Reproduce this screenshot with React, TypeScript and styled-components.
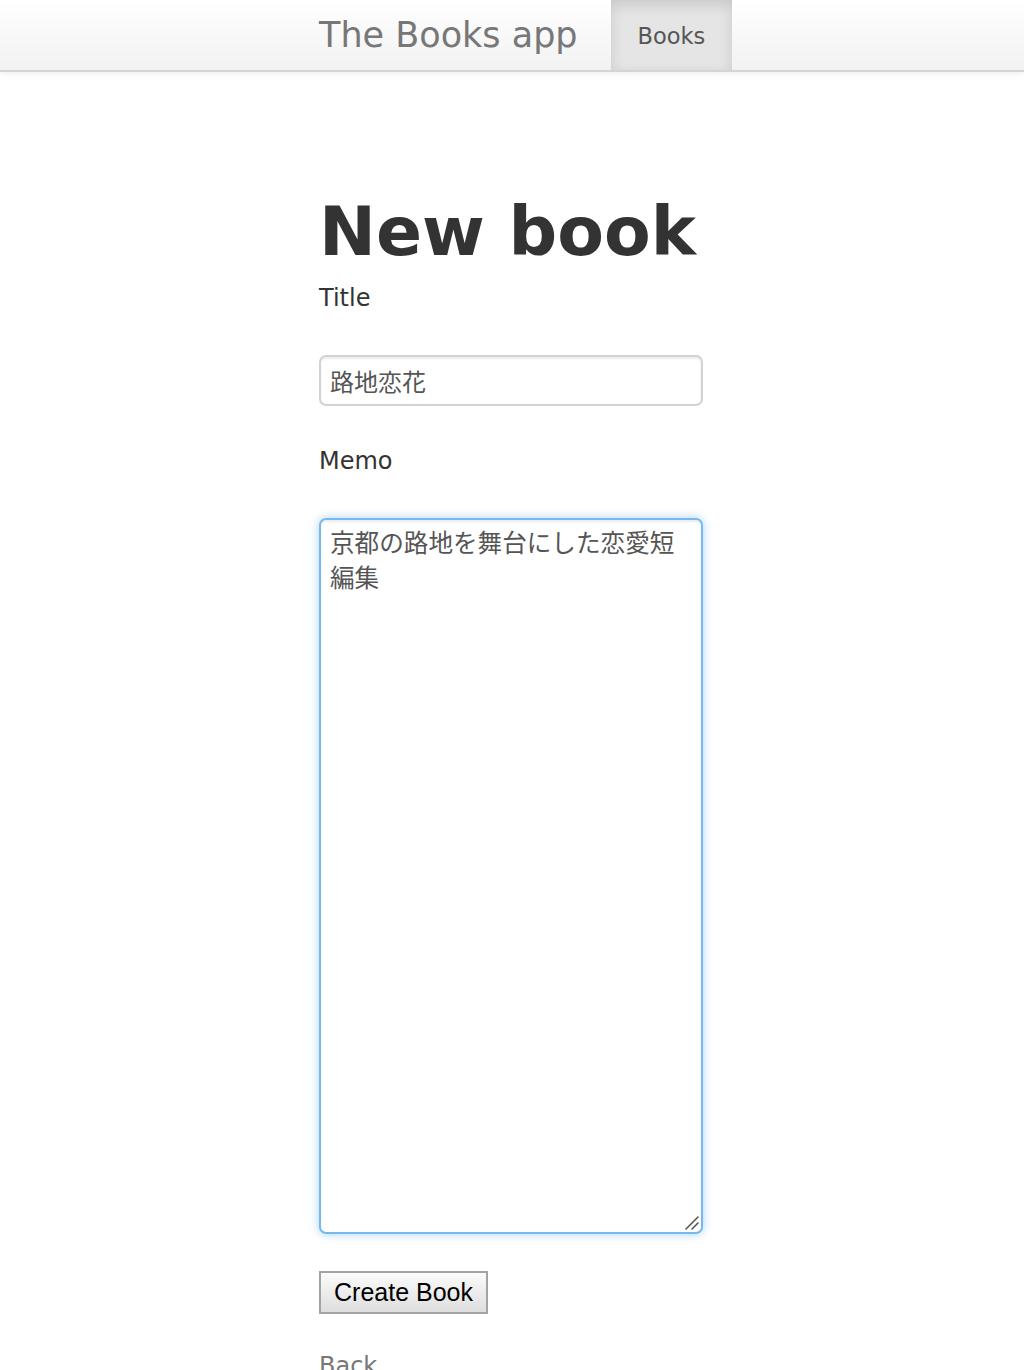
import React from 'react';
import styled, { createGlobalStyle } from 'styled-components';

const GlobalStyle = createGlobalStyle`
  html, body {
    margin: 0;
    padding: 0;
    background: #ffffff;
  }
  body {
    font-family: 'DejaVu Sans', 'Noto Sans CJK JP', sans-serif;
    font-size: 24px;
    line-height: 35px;
    color: #333333;
  }
`;

const Navbar = styled.header`
  height: 70px;
  background: linear-gradient(#ffffff, #f2f2f2);
  border-bottom: 2px solid #d4d4d4;
  box-shadow: 0 2px 6px rgba(0, 0, 0, 0.065);
`;

const Container = styled.div`
  width: 386px;
  margin: 0 auto;
`;

const NavInner = styled(Container)`
  display: flex;
  align-items: stretch;
  height: 70px;
`;

const Brand = styled.a`
  display: flex;
  align-items: center;
  padding: 0 35px 0 0;
  font-size: 35px;
  color: #777777;
  text-decoration: none;
  white-space: nowrap;
`;

const NavItem = styled.a<{ $active?: boolean }>`
  display: flex;
  align-items: center;
  margin-left: -2px;
  padding: 3px 27px 0;
  font-size: 22.5px;
  color: #555555;
  text-decoration: none;
  background: ${(p) => (p.$active ? '#e5e5e5' : 'transparent')};
  box-shadow: ${(p) => (p.$active ? 'inset 0 5px 14px rgba(0, 0, 0, 0.125)' : 'none')};
`;

const Main = styled(Container)`
  padding-top: 125px;
`;

const Heading = styled.h1`
  margin: 0 0 14px;
  font-size: 68px;
  line-height: 70px;
  font-weight: bold;
  color: #333333;
  white-space: nowrap;
`;

const Form = styled.form`
  display: flex;
  flex-direction: column;
  align-items: flex-start;
`;

const Label = styled.label`
  display: block;
  margin-bottom: 39px;
  color: #333333;
`;

const Field = styled.div`
  position: relative;
  margin-bottom: 38px;
`;

const TextInput = styled.input`
  box-sizing: border-box;
  width: 384px;
  height: 51px;
  margin: 0;
  padding: 0 9px;
  font-family: 'DejaVu Sans', 'Noto Sans CJK JP', sans-serif;
  font-size: 24px;
  color: #555555;
  background: #ffffff;
  border: 2px solid #d2d2d2;
  border-radius: 7px;
  box-shadow: inset 0 2px 2px rgba(0, 0, 0, 0.075);
  outline: none;
`;

const TextArea = styled.textarea<{ $focused?: boolean }>`
  box-sizing: border-box;
  display: block;
  width: 384px;
  height: 716px;
  margin: 0;
  padding: 6px 16px 4px 9px;
  font-family: 'DejaVu Sans', 'Noto Sans CJK JP', sans-serif;
  font-size: 24.6px;
  line-height: 35px;
  color: #555555;
  background: #ffffff;
  border: 2px solid ${(p) => (p.$focused ? 'rgba(82, 168, 236, 0.8)' : '#d2d2d2')};
  border-radius: 7px;
  box-shadow: ${(p) =>
    p.$focused
      ? 'inset 0 2px 2px rgba(0, 0, 0, 0.075), 0 0 10px rgba(82, 168, 236, 0.5)'
      : 'inset 0 2px 2px rgba(0, 0, 0, 0.075)'};
  outline: none;
  resize: none;
`;

// the resize grip sits over the textarea's bottom-right corner
const Grip = styled.svg`
  position: absolute;
  right: 4px;
  bottom: 4px;
  width: 14px;
  height: 14px;
  pointer-events: none;
`;

const Actions = styled.div`
  margin-top: -1px;
  margin-bottom: 35px;
`;

const SubmitButton = styled.button`
  box-sizing: border-box;
  height: 43px;
  padding: 0 13px;
  font-family: 'Liberation Sans', Arial, sans-serif;
  font-size: 25px;
  line-height: 39px;
  color: #000000;
  background: linear-gradient(#fbfbfb, #dedede);
  border: 2px solid #a3a3a3;
  border-radius: 0;
  cursor: pointer;
`;

const BackLink = styled.a`
  color: #777777;
  text-decoration: none;
`;

export default function App() {
  return (
    <>
      <GlobalStyle />
      <Navbar>
        <NavInner>
          <Brand href="#">The Books app</Brand>
          <NavItem href="#" $active>
            Books
          </NavItem>
        </NavInner>
      </Navbar>
      <Main>
        <Heading>New book</Heading>
        <Form onSubmit={(e) => e.preventDefault()}>
          <Label htmlFor="book_title">Title</Label>
          <Field>
            <TextInput id="book_title" type="text" defaultValue="路地恋花" />
          </Field>
          <Label htmlFor="book_memo">Memo</Label>
          <Field>
            <TextArea id="book_memo" $focused defaultValue="京都の路地を舞台にした恋愛短編集" />
            <Grip viewBox="0 0 14 14">
              <line x1="1" y1="13" x2="13" y2="1" stroke="#555" strokeWidth="1.6" strokeLinecap="round" />
              <line x1="7" y1="13" x2="13" y2="7" stroke="#555" strokeWidth="1.6" strokeLinecap="round" />
            </Grip>
          </Field>
          <Actions>
            <SubmitButton type="submit">Create Book</SubmitButton>
          </Actions>
        </Form>
        <BackLink href="#">Back</BackLink>
      </Main>
    </>
  );
}
